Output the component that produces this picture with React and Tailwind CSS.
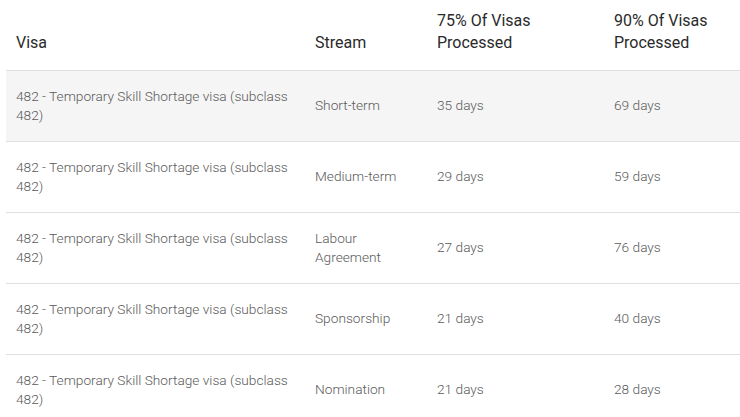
import React from 'react';

const rows = [
  { stream: 'Short-term', p75: '35 days', p90: '69 days' },
  { stream: 'Medium-term', p75: '29 days', p90: '59 days' },
  { stream: 'Labour Agreement', p75: '27 days', p90: '76 days' },
  { stream: 'Sponsorship', p75: '21 days', p90: '40 days' },
  { stream: 'Nomination', p75: '21 days', p90: '28 days' },
];

const VISA = '482 - Temporary Skill Shortage visa (subclass 482)';

export default function App() {
  return (
    <div className="w-[740px] h-[417px] overflow-hidden bg-white pl-[6px] font-['Roboto',sans-serif]">
      <table className="table-fixed border-collapse w-[734px]">
        <colgroup>
          <col className="w-[299px]" />
          <col className="w-[122px]" />
          <col className="w-[177px]" />
          <col className="w-[136px]" />
        </colgroup>
        <thead>
          <tr className="h-[70px] border-b border-[#e0e0e0]">
            {['Visa', 'Stream', '75% Of Visas Processed', '90% Of Visas Processed'].map((h, i) => (
              <th
                key={i}
                className="align-bottom text-left font-normal text-[16px] leading-[22px] text-[#2a2a2a] pl-[10px] pr-3 pb-[16px]"
              >
                {h}
              </th>
            ))}
          </tr>
        </thead>
        <tbody>
          {rows.map((r, i) => (
            <tr
              key={i}
              className={`h-[71px] border-b border-[#e0e0e0] ${i === 0 ? 'bg-[#f5f5f5]' : 'bg-white'}`}
            >
              <td className="align-middle pl-[10px] pr-2 text-[13.7px] leading-[19px] font-light text-[#5a5a5a]">{VISA}</td>
              <td className="align-middle pl-[10px] pr-2 text-[13.7px] leading-[19px] font-light text-[#5a5a5a]">{r.stream}</td>
              <td className="align-middle pl-[10px] pr-2 text-[13.7px] leading-[19px] font-light text-[#5a5a5a]">{r.p75}</td>
              <td className="align-middle pl-[10px] pr-2 text-[13.7px] leading-[19px] font-light text-[#5a5a5a]">{r.p90}</td>
            </tr>
          ))}
        </tbody>
      </table>
    </div>
  );
}
